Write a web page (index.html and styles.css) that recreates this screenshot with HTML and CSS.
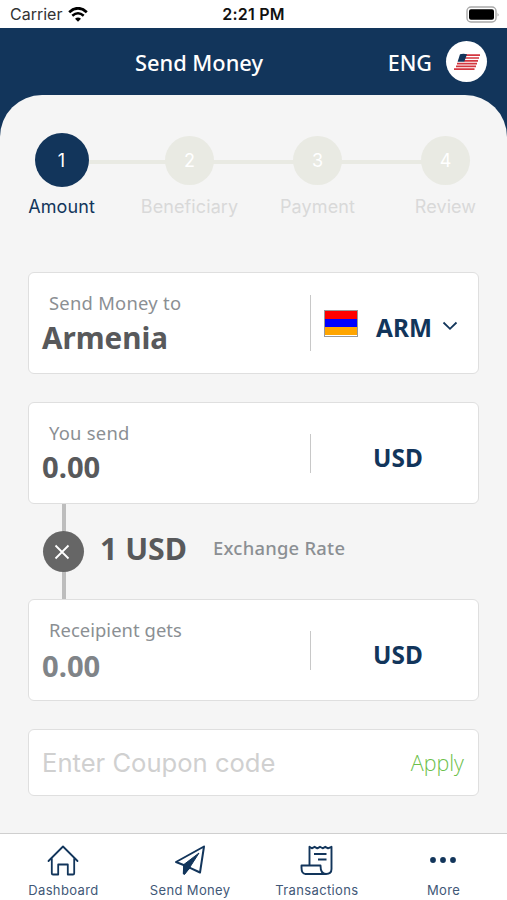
FILE: index.html
```
<!DOCTYPE html>
<html lang="en">
<head>
    <meta charset="UTF-8">
    <meta name="viewport" content="width=device-width, initial-scale=1.0">
    <title>Send Money</title>
    <link rel="stylesheet" href="styles.css">
</head>
<body>
    <div class="status-bar">
        <div class="carrier">
            <span>Carrier</span>
            <svg width="20" height="15" viewBox="0 0 20 15">
                <path d="M1.2 5.2 Q10 -2.6 18.8 5.2" fill="none" stroke="#000" stroke-width="2.8"/>
                <path d="M4.3 8.7 Q10 3.8 15.7 8.7" fill="none" stroke="#000" stroke-width="2.6"/>
                <path d="M7 11.7 Q10 9.2 13 11.7 L10 14.8 Z" fill="#000"/>
            </svg>
        </div>
        <div class="time">2:21 PM</div>
        <svg class="battery" width="34" height="17" viewBox="0 0 34 17">
            <rect x="1" y="1" width="29" height="15" rx="4" fill="#fff" stroke="#a9a9a9" stroke-width="1.4"/>
            <rect x="3" y="3.2" width="25" height="10.6" rx="2" fill="#000"/>
            <path d="M31.6 6.5 Q33.4 8.5 31.6 10.5 Z" fill="#999"/>
        </svg>
    </div>

    <header class="header">
        <h1>Send Money</h1>
        <div class="language">
            <span>ENG</span>
            <div class="language-flag">
                <svg width="28" height="18" viewBox="0 0 28 18">
                    <path d="M13 2.2H27M12 5H26M11 7.8H25M4 10.6H24M3 13.4H23M1 16.2H21.5" stroke="#d3363f" stroke-width="1.7"/>
                    <path d="M7 1.3 Q10 .2 14 1.2 L11.2 8.7 H4.6 Z" fill="#12355b"/>
                </svg>
            </div>
        </div>
    </header>

    <main class="content">
        <div class="steps">
            <div class="step active">
                <div class="step-circle">1</div>
                <div class="step-label">Amount</div>
            </div>
            <div class="step">
                <div class="step-circle">2</div>
                <div class="step-label">Beneficiary</div>
            </div>
            <div class="step">
                <div class="step-circle">3</div>
                <div class="step-label">Payment</div>
            </div>
            <div class="step">
                <div class="step-circle">4</div>
                <div class="step-label">Review</div>
            </div>
        </div>

        <div class="card country">
            <div class="field">
                <div class="label">Send Money to</div>
                <div class="value">Armenia</div>
            </div>
            <div class="picker">
                <div class="flag"><i></i><i></i><i></i></div>
                <span class="code">ARM</span>
                <svg width="16" height="10" viewBox="0 0 16 10">
                    <path d="M1.5 1.5 L8 7.8 L14.5 1.5" fill="none" stroke="#12355b" stroke-width="1.8"/>
                </svg>
            </div>
        </div>

        <div class="card">
            <div class="field">
                <div class="label">You send</div>
                <div class="value amount">0.00</div>
            </div>
            <div class="currency">USD</div>
        </div>

        <div class="rate">
            <div class="rate-line">
                <div class="rate-icon">
                    <svg width="16" height="16" viewBox="0 0 16 16">
                        <path d="M1.5 1.5 L14.5 14.5 M14.5 1.5 L1.5 14.5" stroke="#fff" stroke-width="1.8"/>
                    </svg>
                </div>
            </div>
            <div class="rate-value">1 USD</div>
            <div class="rate-label">Exchange Rate</div>
        </div>

        <div class="card receive">
            <div class="field">
                <div class="label">Receipient gets</div>
                <div class="value amount muted">0.00</div>
            </div>
            <div class="currency">USD</div>
        </div>

        <div class="card coupon">
            <span class="placeholder">Enter Coupon code</span>
            <span class="apply">Apply</span>
        </div>
    </main>

    <nav class="tabs">
        <div class="tab">
            <svg width="34" height="34" viewBox="0 0 34 34">
                <path d="M2.5 18 L17 3.5 L31.5 18 M5.8 15.5 V30.2 Q5.8 31.5 7 31.5 H12.2 V21.5 H21.8 V31.5 H27 Q28.2 31.5 28.2 30.2 V15.5" fill="none" stroke="#12355b" stroke-width="1.8" stroke-linejoin="round" stroke-linecap="round"/>
            </svg>
            <span>Dashboard</span>
        </div>
        <div class="tab">
            <svg width="34" height="34" viewBox="0 0 34 34">
                <path d="M31 3.5 L3 19 L11.2 22.2 L10.8 30.5 L16.5 24.6 L27 29.5 Z" fill="none" stroke="#12355b" stroke-width="2" stroke-linejoin="round"/>
                <path d="M10.5 21.8 L26 10 L16.5 24.8 L11.5 31.5 Z" fill="#12355b" stroke="#12355b" stroke-linejoin="round"/>
            </svg>
            <span>Send Money</span>
        </div>
        <div class="tab">
            <svg width="34" height="34" viewBox="0 0 34 34">
                <path d="M9.5 22 V3.8 L11.8 5.3 L14.6 3.8 L17.3 5.3 L20 3.8 L22.6 5.3 L25.3 3.8 L28 5.3 L31.5 3.8 V26 Q31.5 31 26 31 H5.5 Q1.5 31 1.5 24.5 V22.5 H20.5 Q20.5 31 26 31" fill="none" stroke="#12355b" stroke-width="1.9" stroke-linejoin="round"/>
                <path d="M14 11 H26.5 M18 16.5 H26.5" stroke="#12355b" stroke-width="1.9"/>
            </svg>
            <span>Transactions</span>
        </div>
        <div class="tab">
            <svg width="34" height="34" viewBox="0 0 34 34">
                <circle cx="6" cy="17" r="2.9" fill="#12355b"/>
                <circle cx="16" cy="17" r="2.9" fill="#12355b"/>
                <circle cx="26" cy="17" r="2.9" fill="#12355b"/>
            </svg>
            <span>More</span>
        </div>
    </nav>
</body>
</html>
```
FILE: styles.css
```
* {
    box-sizing: border-box;
}
body {
    margin: 0;
    height: 900px;
    display: flex;
    flex-direction: column;
    overflow: hidden;
    background-color: #12355b;
    font-family: "Noto Sans", "Open Sans", sans-serif;
    white-space: nowrap;
}
.status-bar {
    height: 28px;
    padding: 0 7px 0 10px;
    display: grid;
    grid-template-columns: 1fr auto 1fr;
    align-items: center;
    background-color: #fff;
    font-family: Inter, sans-serif;
    font-size: 16px;
    color: #333;
}
.carrier {
    display: flex;
    align-items: center;
    gap: 6px;
}
.time {
    margin-right: 3px;
    font-weight: 600;
    letter-spacing: 0.2px;
    color: #111;
}
.battery {
    justify-self: end;
}
.header {
    height: 67px;
    padding: 0 20px 0 135px;
    display: flex;
    align-items: center;
    justify-content: space-between;
    color: #fff;
}
.header h1 {
    margin: 2px 0 0;
    font-size: 21.8px;
    font-weight: 500;
}
.language {
    display: flex;
    align-items: center;
    gap: 14px;
    font-size: 21.5px;
    font-weight: 500;
}
.language span {
    margin-top: 2px;
}
.language-flag {
    width: 41px;
    height: 41px;
    border-radius: 50%;
    display: flex;
    align-items: center;
    justify-content: center;
    background-color: #fff;
}
.content {
    height: 738px;
    padding: 0 28px;
    border-radius: 42px 42px 0 0;
    background-color: #f5f5f5;
}
.steps {
    height: 177px;
    padding-top: 38px;
    display: grid;
    grid-template-columns: repeat(4, 128px);
    justify-content: center;
    font-family: Inter, sans-serif;
    font-size: 18px;
}
.step {
    position: relative;
    display: flex;
    flex-direction: column;
    align-items: center;
    color: #d9d9d9;
}
.step + .step::before {
    content: "";
    position: absolute;
    top: 27px;
    left: -64px;
    width: 128px;
    height: 4px;
    background-color: #e9eae3;
}
.step-circle {
    position: relative;
    z-index: 1;
    width: 49px;
    height: 49px;
    margin: 2.5px 0;
    border-radius: 50%;
    display: flex;
    align-items: center;
    justify-content: center;
    background-color: #e9eae3;
    color: #fff;
}
.active .step-circle {
    z-index: 2;
    width: 54px;
    height: 54px;
    margin: 0;
    background-color: #12355b;
}
.step-label {
    margin-top: 9px;
    line-height: 22px;
    letter-spacing: 0.1px;
}
.active .step-label {
    color: #12355b;
}
.card {
    height: 102px;
    border: 1px solid #dfdfdf;
    border-radius: 6px;
    display: flex;
    align-items: center;
    background-color: #fff;
}
.country {
    margin-bottom: 28px;
}
.field {
    width: 281px;
    height: 100%;
    padding: 17px 0 0 13px;
}
.label {
    margin-left: 7px;
    line-height: 26px;
    font-size: 18.4px;
    letter-spacing: 0.25px;
    color: #8b8f93;
}
.receive .label {
    letter-spacing: 0.05px;
}
.value {
    line-height: 44px;
    font-size: 29.6px;
    font-weight: 700;
    color: #58595b;
}
.amount {
    line-height: 42px;
    font-size: 29.2px;
}
.muted {
    line-height: 46px;
    color: #808488;
}
.picker {
    height: 56px;
    padding-left: 13px;
    border-left: 1px solid #c8c8c8;
    display: flex;
    align-items: center;
}
.flag {
    width: 34px;
    height: 27px;
    border: 1px solid #999;
    display: flex;
    flex-direction: column;
}
.flag i {
    flex: 1;
    background-color: #f00;
}
.flag i:nth-child(2) {
    background-color: #00f;
}
.flag i:nth-child(3) {
    background-color: #ffa500;
}
.code {
    margin: 8px 10px 0 18px;
}
.picker svg {
    margin-top: 6px;
}
.code,
.currency {
    font-size: 24.4px;
    font-weight: 700;
    color: #12355b;
}
.currency {
    height: 39px;
    padding: 6px 0 0 62px;
    border-left: 1px solid #c8c8c8;
    line-height: 36px;
}
.rate {
    height: 95px;
    padding-left: 15px;
    display: flex;
    align-items: center;
}
.rate-line {
    width: 41px;
    height: 95px;
    display: flex;
    align-items: center;
    justify-content: center;
    background: linear-gradient(#bdbdbd, #bdbdbd) center / 4px 100% no-repeat;
}
.rate-icon {
    width: 41px;
    height: 41px;
    padding-right: 3px;
    border-radius: 50%;
    display: flex;
    align-items: center;
    justify-content: center;
    background-color: #666;
}
.rate-value {
    margin: -7px 26px 0 16px;
    font-size: 30.3px;
    font-weight: 700;
    color: #58595b;
}
.rate-label {
    margin-top: -9px;
    font-size: 18.4px;
    font-weight: 500;
    letter-spacing: 0.25px;
    color: #8b8f93;
}
.coupon {
    height: 67px;
    margin-top: 28px;
    padding: 0 14px 0 13px;
    justify-content: space-between;
}
.placeholder {
    font-family: Inter, sans-serif;
    font-size: 25.6px;
    color: #d0d0d0;
}
.apply {
    font-family: "Open Sans", sans-serif;
    font-size: 21.5px;
    font-weight: 300;
    color: #6cc04a;
}
.tabs {
    height: 67px;
    padding: 9px 0 0;
    border-top: 1px solid #cfcfcf;
    display: grid;
    grid-template-columns: repeat(4, 1fr);
    background-color: #fff;
    font-family: Inter, sans-serif;
    font-size: 13px;
    letter-spacing: 0.35px;
    color: #3f5877;
}
.tab {
    display: flex;
    flex-direction: column;
    align-items: center;
}
.tab span {
    line-height: 18px;
    margin-top: 4px;
}
```
